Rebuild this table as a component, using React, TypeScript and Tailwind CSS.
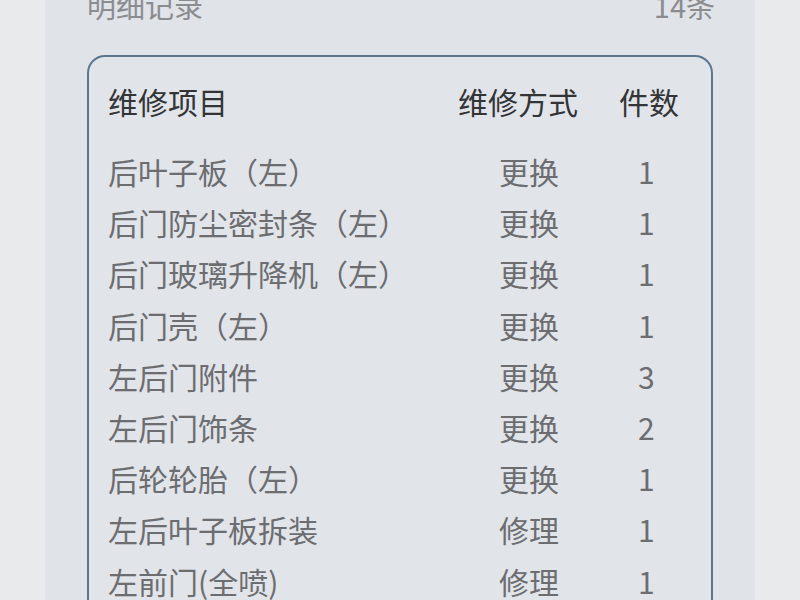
import React from "react";

const rows: [string, string, string][] = [
  ["后叶子板（左）", "更换", "1"],
  ["后门防尘密封条（左）", "更换", "1"],
  ["后门玻璃升降机（左）", "更换", "1"],
  ["后门壳（左）", "更换", "1"],
  ["左后门附件", "更换", "3"],
  ["左后门饰条", "更换", "2"],
  ["后轮轮胎（左）", "更换", "1"],
  ["左后叶子板拆装", "修理", "1"],
  ["左前门(全喷)", "修理", "1"],
  ["左前门(全喷)", "修理", "1"],
];

const font = { fontFamily: '"Noto Sans CJK SC", "Noto Sans", sans-serif' };

export default function App() {
  return (
    <div
      className="w-[800px] h-[600px] overflow-hidden bg-[#e9eaec] flex justify-center"
      style={font}
    >
      <div className="w-[710px] h-full bg-[#e0e3e8] flex flex-col px-[42px]">
        <div className="flex justify-between items-center h-[30px] mt-[-10px] text-[29px] leading-[30px] text-[#8a8c90]">
          <span>明细记录</span>
          <span className="mr-[-2px]">14条</span>
        </div>
        <div className="mt-[35px] border-2 border-[#5d7690] rounded-[18px] pt-[19px] pl-[19px] pr-[30px] bg-[#e1e4e9]">
          <div className="flex items-center h-[51px] text-[30px] text-[#333436] mb-[19px]">
            <span className="flex-1">维修项目</span>
            <span className="w-[161px] whitespace-nowrap">维修方式</span>
            <span className="w-[62px] whitespace-nowrap">件数</span>
          </div>
          {rows.map((r, i) => (
            <div
              key={i}
              className="flex items-center h-[51.2px] text-[30px] text-[#6c6d70]"
            >
              <span className="flex-1 whitespace-nowrap">{r[0]}</span>
              <span className="w-[161px] pl-[41px] whitespace-nowrap">{r[1]}</span>
              <span className="w-[62px] pl-[19px]">{r[2]}</span>
            </div>
          ))}
        </div>
      </div>
    </div>
  );
}
